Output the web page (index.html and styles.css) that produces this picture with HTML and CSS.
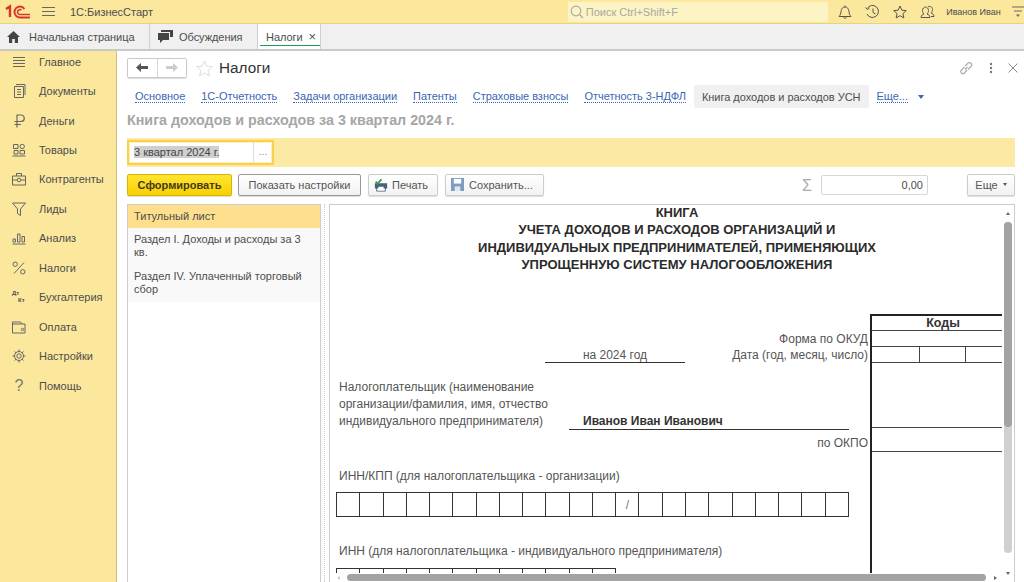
FILE: index.html
```html
<!DOCTYPE html>
<html lang="ru">
  <head>
    <meta charset="UTF-8" />
    <meta name="viewport" content="width=device-width, initial-scale=1.0" />
    <title>Налоги</title>
    <link rel="stylesheet" href="styles.css">
  </head>
  <body>
    <header class="topbar">
      <svg class="logo" width="26" height="16" viewBox="0 0 26 16" fill="none" stroke="#d9352a">
        <path d="M1 5 L5 2.5 V13" stroke-width="2.4"/>
        <path d="M25 13.5 H15 A5.5 5.5 0 1 1 15 2.5 A5.5 5.5 0 0 1 19.5 5" stroke-width="2"/>
        <path d="M25 10.5 H15.5 A2.5 2.5 0 1 1 16.5 6" stroke-width="1.6"/>
      </svg>
      <svg class="burger" width="13" height="11" viewBox="0 0 13 11" stroke="#666"><path d="M0 1.5H13M0 5.5H13M0 9.5H13"/></svg>
      <span class="app-name">1С:БизнесСтарт</span>
      <div class="search">
        <svg width="14" height="14" viewBox="0 0 14 14" fill="none" stroke="#aaa" stroke-width="1.2"><circle cx="6" cy="6" r="4.8"/><path d="M9.5 9.5L13 13"/></svg>
        <span>Поиск Ctrl+Shift+F</span>
      </div>
      <div class="top-icons">
        <svg width="14" height="14" viewBox="0 0 14 14" fill="none" stroke="#555"><path d="M1 11.5C2.5 10 2.8 8.5 3 6.5C3.2 3.5 5 2 7 2s3.8 1.500 4 4.500c.2 2 .5 3.500 2 5zM5.500 12.500c.5 1 2.500 1 3 0M7 .5V2"/></svg>
        <svg width="15" height="14" viewBox="0 0 15 14" fill="none" stroke="#555"><path d="M2.200 3.500A6 6 0 1 1 2 9"/><path d="M.5 2.500l2 2 2-1.500M8 3.500V7.500L10.500 9"/></svg>
        <svg width="14" height="14" viewBox="0 0 14 14" fill="none" stroke="#555"><path d="M7 1l1.800 4.200 4.500.4-3.400 3 1 4.400L7 10.700 3.100 13l1-4.400-3.400-3 4.500-.4z"/></svg>
        <svg width="15" height="14" viewBox="0 0 15 14" fill="none" stroke="#555"><path d="M1 12.500c0-2 1.500-3 3-3.500-1-1-1.500-2-1.500-3.500C2.500 3.500 4 2 5.500 2S8.500 3.500 8.500 5.500C8.500 7 8 8 7 9c1.500.5 3 1.500 3 3.500zM8 2c2-1.500 4.500 0 4.500 2.500 0 1.500-.5 2.500-1.500 3.500 1.500.5 3 1.500 3 3.500h-3"/></svg>
      </div>
      <span class="user">Иванов Иван</span>
      <svg class="top-menu" width="12" height="13" viewBox="0 0 12 13" stroke="#666" fill="#666"><path d="M0 2H12M2 6H10" fill="none"/><path d="M4 9.500H8L6 12z" stroke="none"/></svg>
    </header>

    <nav class="tabbar">
      <div class="win-tab home-tab">
        <svg width="13" height="12" viewBox="0 0 13 12" fill="#444"><path d="M6.500 0L0 6H2V12H5.200V8H7.800V12H11V6H13z"/></svg>
        <span>Начальная страница</span>
      </div>
      <div class="win-tab talk-tab">
        <svg width="15" height="13" viewBox="0 0 15 13" fill="#444"><path d="M0 3H11V10H5L2 13V10H0z"/><path d="M3 0H15V7H12V2H3z"/></svg>
        <span>Обсуждения</span>
      </div>
      <div class="win-tab active-tab">
        <span>Налоги</span>
        <span class="tab-close">×</span>
      </div>
    </nav>

    <div class="workspace">
      <aside class="sidebar">
        <a class="side-item">
          <svg width="14" height="14" viewBox="0 0 14 14" stroke="#666"><path d="M1 2.500H13M1 5.500H13M1 8.500H13M1 11.500H13"/></svg>
          Главное
        </a>
        <a class="side-item">
          <svg width="14" height="14" viewBox="0 0 14 14" fill="none" stroke="#666"><path d="M2.500 2.500H11.500V13.500H2.500zM4 .5H13V11M5 5.500H9M5 8H9M5 10.500H9"/></svg>
          Документы
        </a>
        <a class="side-item">
          <svg width="14" height="14" viewBox="0 0 14 14" fill="none" stroke="#666" stroke-width="1.200"><path d="M5 13.500V1H9A3 3 0 0 1 9 7.500H2.500M2.500 10.500H9"/></svg>
          Деньги
        </a>
        <a class="side-item">
          <svg width="14" height="14" viewBox="0 0 14 14" fill="none" stroke="#666"><path d="M1.500 1.500H6V5.500H1.500zM2 7.500H6V11H2zM8 7.500H12.500V11H8zM.5 13H13.500"/><circle cx="10.200" cy="3.500" r="2.200"/></svg>
          Товары
        </a>
        <a class="side-item">
          <svg width="14" height="14" viewBox="0 0 14 14" fill="none" stroke="#666"><path d="M.5 4H13.500V13H.5zM4.500 4V1.500H9.500V4M.5 8H5M9 8H13.500"/><circle cx="7" cy="8" r="1.800"/></svg>
          Контрагенты
        </a>
        <a class="side-item">
          <svg width="14" height="14" viewBox="0 0 14 14" fill="none" stroke="#666"><path d="M.5 1H13.500L8.500 7V13.500L5.500 11.500V7z"/></svg>
          Лиды
        </a>
        <a class="side-item">
          <svg width="14" height="14" viewBox="0 0 14 14" fill="none" stroke="#666"><path d="M1 8H3.500V11H1zM5.500 3H8V11H5.500zM10 5.500H12.500V11H10zM.5 13H13.500"/></svg>
          Анализ
        </a>
        <a class="side-item">
          <svg width="14" height="14" viewBox="0 0 14 14" fill="none" stroke="#666"><circle cx="3.200" cy="3.200" r="2.200"/><circle cx="10.800" cy="10.800" r="2.200"/><path d="M12 1.500L2 12.500"/></svg>
          Налоги
        </a>
        <a class="side-item">
          <span class="dt-kt"><span>Дт</span><span class="kt">Кт</span></span>
          Бухгалтерия
        </a>
        <a class="side-item">
          <svg width="14" height="14" viewBox="0 0 14 14" fill="none" stroke="#666"><path d="M.5 4V13H13V4H.5V2H8.500L10 4"/><circle cx="10.500" cy="9.500" r="1.200"/></svg>
          Оплата
        </a>
        <a class="side-item">
          <svg width="14" height="14" viewBox="0 0 14 14" fill="none" stroke="#666"><circle cx="7" cy="7" r="2.200"/><circle cx="7" cy="7" r="4.500"/><path d="M7 .5V2.500M7 11.500V13.500M.5 7H2.500M11.500 7H13.500M2.500 2.500L3.800 3.800M10.200 10.200L11.500 11.500M2.500 11.500L3.800 10.200M10.200 3.800L11.500 2.500"/></svg>
          Настройки
        </a>
        <a class="side-item">
          <span class="help-mark">?</span>
          Помощь
        </a>
      </aside>

      <main class="main">
        <div class="form-head">
          <div class="nav-btns">
            <button class="nav-btn">
              <svg width="12" height="9" viewBox="0 0 12 9" fill="#555"><path d="M0 4.500L5 0V3H12V6H5V9z"/></svg>
            </button>
            <button class="nav-btn">
              <svg width="12" height="9" viewBox="0 0 12 9" fill="#ccc"><path d="M12 4.500L7 0V3H0V6H7V9z"/></svg>
            </button>
          </div>
          <svg class="fav" width="17" height="17" viewBox="0 0 17 17" fill="none" stroke="#ddd"><path d="M8.500 1l2.200 5.200 5.600.5-4.200 3.700 1.300 5.500-4.900-3-4.900 3 1.300-5.500L.7 6.700l5.600-.5z"/></svg>
          <h1 class="form-title">Налоги</h1>
          <div class="head-tools">
            <svg width="14" height="14" viewBox="0 0 14 14" fill="none" stroke="#aaa" stroke-width="1.200"><path d="M6 8.500L8.500 6M5.500 6L2 9.500A2.300 2.300 0 0 0 5 12.500L8 9M6 5L9.500 1.800A2.300 2.300 0 0 1 12.500 5L9 8.500"/></svg>
            <svg width="4" height="12" viewBox="0 0 4 12" fill="#777"><circle cx="2" cy="2" r="1.200"/><circle cx="2" cy="6" r="1.200"/><circle cx="2" cy="10" r="1.200"/></svg>
            <svg width="10" height="10" viewBox="0 0 10 10" stroke="#888"><path d="M.5 .5L9.500 9.500M9.500 .5L.5 9.500"/></svg>
          </div>
        </div>

        <div class="form-links">
          <a class="form-link">Основное</a>
          <a class="form-link">1С-Отчетность</a>
          <a class="form-link">Задачи организации</a>
          <a class="form-link">Патенты</a>
          <a class="form-link">Страховые взносы</a>
          <a class="form-link">Отчетность 3-НДФЛ</a>
          <span class="form-link-current">Книга доходов и расходов УСН</span>
          <a class="form-link">Еще...</a>
          <span class="more-arrow"></span>
        </div>

        <h2 class="report-title">Книга доходов и расходов за 3 квартал 2024 г.</h2>

        <div class="period-band">
          <div class="period-field">
            <span class="period-value"><span class="selected">3 квартал 2024 г.</span></span>
            <span class="period-pick">...</span>
          </div>
        </div>

        <div class="actions">
          <button class="btn btn-primary">Сформировать</button>
          <button class="btn btn-dark">Показать настройки</button>
          <button class="btn btn-print">
            <svg width="14" height="14" viewBox="0 0 16 14"><path d="M3 8H13V14H3z" fill="#fff" stroke="#567"/><path d="M1 5H15V11H1z" fill="#46617f"/><path d="M5 9H11V13H5z" fill="#fff"/><path d="M2 3L4 5.500L8.500 .5" fill="none" stroke="#3d9b3d" stroke-width="2"/></svg>
            Печать
          </button>
          <button class="btn btn-save">
            <svg width="13" height="13" viewBox="0 0 14 14"><path d="M0 0H14V14H0z" fill="#7d9cc0"/><path d="M3 1H11V6H3z" fill="#fff"/><path d="M4 9H10V14H4z" fill="#dfe7f0"/></svg>
            Сохранить...
          </button>
          <span class="sum-sign">Σ</span>
          <div class="sum-field">0,00</div>
          <button class="btn btn-more">Еще <span class="more-caret"></span></button>
        </div>

        <div class="report-area">
          <div class="sections">
            <div class="section section-current">Титульный лист</div>
            <div class="section">Раздел I. Доходы и расходы за 3 кв.</div>
            <div class="section">Раздел IV. Уплаченный торговый сбор</div>
          </div>
          <div class="splitter"></div>
          <div class="sheet-frame">
            <div class="sheet">
              <div class="sheet-title">
                КНИГА<br>
                УЧЕТА ДОХОДОВ И РАСХОДОВ ОРГАНИЗАЦИЙ И<br>
                ИНДИВИДУАЛЬНЫХ ПРЕДПРИНИМАТЕЛЕЙ, ПРИМЕНЯЮЩИХ<br>
                УПРОЩЕННУЮ СИСТЕМУ НАЛОГООБЛОЖЕНИЯ
              </div>

              <div class="sheet-grid">
                <div class="sheet-left">
                  <div class="line-row">Форма по ОКУД</div>
                  <div class="line-row date-row">
                    <span class="year-cell">на 2024 год</span>
                    <span>Дата (год, месяц, число)</span>
                  </div>
                  <div class="payer">
                    <div class="payer-label">Налогоплательщик (наименование организации/фамилия, имя, отчество индивидуального предпринимателя)</div>
                    <div class="payer-name">Иванов Иван Иванович</div>
                  </div>
                  <div class="line-row okpo-row">по ОКПО</div>
                  <div class="inn-label inn-first">ИНН/КПП (для налогоплательщика - организации)</div>
                  <div class="cells cells-full" id="inn-kpp"></div>
                  <div class="inn-label inn-second">ИНН (для налогоплательщика - индивидуального предпринимателя)</div>
                  <div class="cells" id="inn"></div>
                </div>

                <div class="codes">
                  <div class="code-row code-head">Коды</div>
                  <div class="code-row"></div>
                  <div class="code-row code-date"><span></span><span></span><span></span></div>
                  <div class="code-row code-tall"></div>
                  <div class="code-row code-okpo"></div>
                </div>
              </div>
            </div>

            <div class="vscroll">
              <span class="arrow-up"></span>
              <div class="vtrack"><div class="vthumb"></div></div>
              <span class="arrow-down"></span>
            </div>
            <div class="hscroll">
              <span class="arrow-left"></span>
              <div class="hthumb"></div>
              <span class="arrow-right"></span>
            </div>
          </div>
        </div>
      </main>
    </div>

    <script>
      // Клетки ИНН/КПП
      const fillCells = (id, count, slashAt) => {
        const row = document.getElementById(id);
        for (let i = 0; i < count; i++) {
          const cell = document.createElement("span");
          cell.className = "cell";
          if (i === slashAt) cell.textContent = "/";
          row.appendChild(cell);
        }
      };
      fillCells("inn-kpp", 22, 12);
      fillCells("inn", 12, -1);
    </script>
  </body>
</html>
```

FILE: styles.css
```css
* {
  box-sizing: border-box;
}

html,
body {
  height: 582px;
  margin: 0;
  overflow: hidden;
}

body {
  display: flex;
  flex-direction: column;
  background-color: white;
  font-family: "Liberation Sans", Arial, sans-serif;
  font-size: 11px;
  color: #4d4d4d;
}

button {
  font-family: inherit;
  font-size: 11px;
  margin: 0;
}

/* Верхняя панель */
.topbar {
  display: flex;
  align-items: center;
  flex: 0 0 24px;
  background-color: #fbe89c;
  border-bottom: 1px solid #e5d384;
}

.logo {
  margin-left: 5px;
}

.burger {
  margin-left: 11px;
}

.app-name {
  margin-left: 15px;
  width: 499px;
  font-size: 11px;
}

.search {
  display: flex;
  align-items: center;
  gap: 2px;
  width: 261px;
  height: 20px;
  padding-left: 2px;
  background-color: #fdf4c6;
  color: #a8a8a0;
  font-size: 11px;
}

.top-icons {
  display: flex;
  align-items: center;
  gap: 13px;
  margin-left: 10px;
}

.user {
  margin-left: 11px;
  width: 60px;
  font-size: 9px;
}

.top-menu {
  margin-left: 6px;
}

/* Вкладки окон */
.tabbar {
  display: flex;
  flex: 0 0 27px;
  background-color: #f0f0f0;
  border-bottom: 2px solid #c9c9c9;
}

.win-tab {
  display: flex;
  align-items: center;
  height: 25px;
  border-right: 1px solid #d0d0d0;
  letter-spacing: -0.05px;
}

.home-tab {
  width: 150px;
  padding-left: 7px;
  gap: 9px;
}

.talk-tab {
  width: 108px;
  padding-left: 8px;
  gap: 6px;
}

.active-tab {
  width: 63px;
  padding-left: 8px;
  gap: 6px;
  background-color: white;
  box-shadow: inset 2px -3px 0 white, inset 0 -4px 0 #1c9a5a;
}

.tab-close {
  font-size: 13px;
  color: #555;
}

/* Левая панель разделов */
.workspace {
  display: flex;
  flex: 1;
  min-height: 0;
}

.sidebar {
  flex: 0 0 117px;
  background-color: #fbe89c;
  border-right: 1px solid #cdbd77;
}

.side-item {
  display: flex;
  align-items: center;
  gap: 13px;
  height: 29.45px;
  padding: 0 0 8px 12px;
  font-size: 11px;
}

.dt-kt {
  display: block;
  width: 14px;
  height: 14px;
  font-size: 6px;
  font-weight: bold;
  line-height: 7px;
}

.kt {
  display: block;
  padding-left: 6px;
}

.help-mark {
  width: 14px;
  font-size: 16px;
  text-align: center;
  color: #777;
}

/* Форма */
.main {
  flex: 1;
  display: flex;
  flex-direction: column;
  min-width: 0;
  padding: 7px 9px 0 10px;
}

.form-head {
  display: flex;
  align-items: center;
  height: 20px;
}

.nav-btns {
  display: flex;
  width: 60px;
  height: 20px;
  border: 1px solid #c9c9c9;
  border-radius: 2px;
  box-shadow: 0 1px 1px #ddd;
}

.nav-btn {
  flex: 1;
  padding: 0;
  border: none;
  background: white;
}

.nav-btn + .nav-btn {
  border-left: 1px solid #d8d8d8;
}

.fav {
  margin-left: 9px;
}

.form-title {
  margin: 0 0 0 6px;
  font-size: 15.3px;
  font-weight: normal;
  color: #333;
}

.head-tools {
  display: flex;
  align-items: center;
  gap: 16px;
  margin-left: auto;
  margin-right: -3px;
}

.head-tools svg:last-child {
  margin-left: -1px;
}

.form-links {
  display: flex;
  align-items: center;
  height: 23px;
  margin-top: 7px;
  padding-left: 8px;
  letter-spacing: -0.02px;
}

.form-link {
  margin-right: 16px;
  color: #3a67b3;
  border-bottom: 1px dotted #3a67b3;
  line-height: 12px;
}

.form-link-current {
  display: flex;
  align-items: center;
  height: 23px;
  margin: 0 8px 0 -8px;
  padding: 0 8px;
  background-color: #f0f0f0;
  border-radius: 2px;
}

.more-arrow {
  margin-left: -6px;
  border-top: 4px solid #3a67b3;
  border-left: 3px solid transparent;
  border-right: 3px solid transparent;
}

.report-title {
  margin: 4px 0 0;
  height: 21px;
  font-size: 14.3px;
  line-height: 16px;
  color: #a6a6a6;
}

.period-band {
  display: flex;
  align-items: center;
  height: 29px;
  margin-top: 5px;
  background-color: #fce9a3;
}

.period-field {
  display: flex;
  width: 147px;
  height: 25px;
  background-color: white;
  border: 2px solid #fbd14b;
  box-shadow: inset 0 0 0 1px #fdf0bb;
}

.period-value {
  flex: 1;
  padding: 4px 0 0 5px;
  color: #444;
}

.selected {
  background-color: #cfcfcf;
}

.period-pick {
  width: 19px;
  padding-top: 3px;
  text-align: center;
  color: #999;
  border-left: 1px solid #ddd;
}

.actions {
  display: flex;
  align-items: center;
  height: 23px;
  margin-top: 6px;
}

.btn {
  display: flex;
  align-items: center;
  justify-content: center;
  gap: 5px;
  height: 22px;
  padding: 0;
  margin-right: 7px;
  color: #555;
  background: linear-gradient(#fff, #f2f2f2);
  border: 1px solid #ccc;
  border-radius: 2px;
  box-shadow: 0 1px 1px #ddd;
}

.btn-primary {
  width: 105px;
  margin-right: 6px;
  font-weight: bold;
  color: #43391a;
  background: linear-gradient(#ffe533, #f8d000);
  border-color: #d9b400;
}

.btn-dark {
  width: 123px;
  margin-right: 7px;
  border-color: #999;
}

.btn-print {
  justify-content: flex-start;
  width: 70px;
  padding-left: 5px;
  gap: 4px;
}

.btn-save {
  justify-content: flex-start;
  width: 99px;
  padding-left: 5px;
  gap: 5px;
}

.sum-sign {
  margin-left: auto;
  margin-right: 9px;
  padding-top: 2px;
  font-size: 16px;
  color: #aaa;
}

.sum-field {
  width: 107px;
  height: 20px;
  padding: 3px 4px 0 0;
  text-align: right;
  border: 1px solid #d6d6d6;
  border-radius: 2px;
}

.btn-more {
  width: 48px;
  margin-left: 39px;
  margin-right: 0;
}

.more-caret {
  border-top: 3px solid #555;
  border-left: 2px solid transparent;
  border-right: 2px solid transparent;
}

/* Область отчета */
.report-area {
  display: flex;
  flex: 1;
  min-height: 0;
  margin-top: 8px;
}

.sections {
  width: 194px;
  background-color: white;
  border: 1px solid #ccc;
  border-bottom: none;
}

.section {
  padding: 5px 6px;
  line-height: 13px;
  background-color: #f9f9f9;
  min-height: 37px;
}

.section-current {
  min-height: 23px;
  background-color: #fddf8e;
}

.splitter {
  width: 2px;
  margin: 0 3px;
  border-left: 1px dotted #ccc;
}

.sheet-frame {
  position: relative;
  flex: 1;
  min-width: 0;
  overflow: hidden;
  border: 1px solid #ccc;
  border-bottom: none;
}

.sheet {
  width: 694px;
}

.sheet-title {
  margin-top: -1px;
  font-size: 13px;
  font-weight: bold;
  line-height: 17.4px;
  text-align: center;
  color: #2b2b2b;
}

.sheet-grid {
  display: grid;
  grid-template-columns: 540px 144px;
  margin-top: 40px;
}

.sheet-left {
  padding-top: 17px;
  font-size: 12px;
  color: #555;
}

.line-row {
  height: 16px;
  line-height: 16px;
  text-align: right;
  padding-right: 2px;
}

.date-row {
  display: flex;
  justify-content: space-between;
  padding-left: 215px;
}

.year-cell {
  width: 140px;
  text-align: center;
  border-bottom: 1px solid #333;
}

.payer {
  position: relative;
  height: 53px;
  margin-top: 16px;
  padding-left: 9px;
}

.payer-label {
  width: 210px;
  line-height: 17px;
}

.payer-name {
  position: absolute;
  left: 239px;
  top: 34px;
  width: 280px;
  height: 17px;
  padding-left: 14px;
  font-weight: bold;
  line-height: 16px;
  color: #333;
  border-bottom: 1px solid #333;
}

.okpo-row {
  height: 22px;
  line-height: 22px;
}

.inn-label {
  padding-left: 9px;
  line-height: 16px;
}

.inn-first {
  margin-top: 14px;
}

.inn-second {
  margin-top: 26px;
}

.cells {
  display: flex;
  width: max-content;
  margin: 9px 0 0 6px;
  border-top: 1px solid #333;
  border-left: 1px solid #333;
}

.cells-full {
  margin-top: 8px;
}

.cell {
  width: 23.27px;
  height: 24px;
  text-align: center;
  line-height: 24px;
  color: #777;
  border-right: 1px solid #333;
  border-bottom: 1px solid #333;
}

.codes {
  border-left: 2px solid #222;
  border-top: 2px solid #222;
  height: 400px;
  font-size: 12.5px;
  color: #333;
}

.code-row {
  height: 16px;
  border-bottom: 1px solid #444;
}

.code-head {
  height: 15px;
  font-weight: bold;
  text-align: center;
  line-height: 15px;
}

.code-date {
  display: flex;
}

.code-date span {
  width: 48px;
  border-right: 1px solid #444;
}

.code-date span:nth-child(2) {
  width: 47px;
}

.code-date span:last-child {
  border-right: none;
}

.code-tall {
  height: 65px;
}

.code-okpo {
  height: 24px;
}

/* Полосы прокрутки */
.vscroll {
  position: absolute;
  top: 0;
  right: 0;
  bottom: 0;
  display: flex;
  flex-direction: column;
  align-items: center;
  width: 12px;
  background-color: white;
}

.arrow-up,
.arrow-down {
  margin: 7px 0;
  border-left: 2px solid transparent;
  border-right: 2px solid transparent;
}

.arrow-up {
  border-bottom: 3px solid #666;
}

.arrow-down {
  border-top: 3px solid #666;
}

.vtrack {
  flex: 1;
  width: 8px;
  margin-bottom: 12px;
  background-color: #d0d0d0;
  border-radius: 4px;
}

.vthumb {
  height: 205px;
  background-color: #a3a3a3;
  border-radius: 4px;
}

.hscroll {
  position: absolute;
  left: 0;
  right: 12px;
  bottom: 0;
  display: flex;
  align-items: center;
  height: 9px;
  padding: 0 5px 0 7px;
  background-color: white;
}

.hthumb {
  flex: 1;
  height: 7px;
  margin: 0 8px 0 7px;
  background-color: #a3a3a3;
  border-radius: 4px;
}

.arrow-left,
.arrow-right {
  border-top: 2px solid transparent;
  border-bottom: 2px solid transparent;
}

.arrow-left {
  border-right: 3px solid #ccc;
}

.arrow-right {
  border-left: 3px solid #666;
}
```
